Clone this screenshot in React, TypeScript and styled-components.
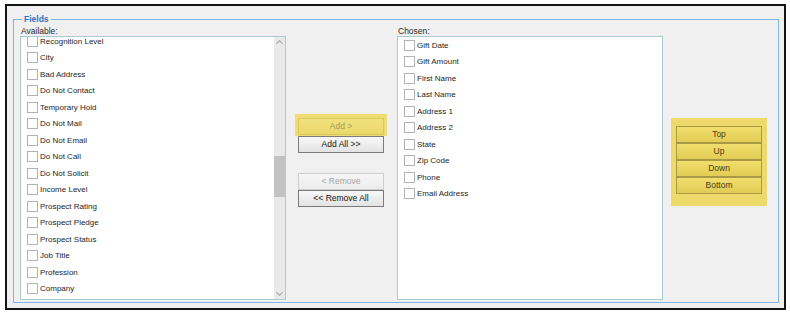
import React from "react";
import styled, { createGlobalStyle } from "styled-components";

const GlobalStyle = createGlobalStyle`
  body {
    margin: 0;
    background: #ffffff;
    font-family: "Liberation Sans", "DejaVu Sans", sans-serif;
  }
`;

const Frame = styled.div`
  margin: 4px 0 0 5px;
  width: 781px;
  box-sizing: border-box;
  border: 2px solid #141414;
  background: #f0f0f0;
  padding: 8px 5px 5px 6px;
`;

const FieldSet = styled.fieldset`
  margin: 0;
  border: 1px solid #7fb4e4;
  padding: 2px 11px 2px 6px;
  display: flex;
  align-items: flex-start;
`;

const Legend = styled.legend`
  margin-left: 2px;
  padding: 0 2px;
  color: #2f72c4;
  font-size: 8.5px;
  font-weight: bold;
  line-height: 10px;
`;

const Column = styled.div`
  display: flex;
  flex-direction: column;
  width: 266px;
`;

const Caption = styled.div`
  font-size: 8.5px;
  line-height: 10px;
  height: 10px;
  color: #2b2b2b;
  padding-left: 1px;
`;

const ListBox = styled.div`
  position: relative;
  height: 264px;
  box-sizing: border-box;
  border: 1px solid #a9cbd3;
  background: #ffffff;
  overflow: hidden;
`;

const Items = styled.ul<{ $offset: number }>`
  list-style: none;
  margin: ${(p) => p.$offset}px 0 0 0;
  padding: 0;
`;

const Item = styled.li`
  height: 16.53px;
  display: flex;
  align-items: center;
  padding-left: 6px;
  font-size: 8px;
  color: #1e1e1e;
`;

const Check = styled.span`
  width: 9px;
  height: 9px;
  border: 1px solid #b3b3b3;
  background: #ffffff;
  margin-right: 2px;
  flex-shrink: 0;
`;

const ScrollTrack = styled.div`
  position: absolute;
  top: 0;
  right: 0;
  bottom: 0;
  width: 11px;
  background: #e9e9e9;
`;

const ScrollArrow = styled.div<{ $down?: boolean }>`
  position: absolute;
  left: 3px;
  ${(p) => (p.$down ? "bottom: 4px;" : "top: 4px;")}
  width: 4px;
  height: 4px;
  border-left: 1px solid #a8a8a8;
  border-top: 1px solid #a8a8a8;
  transform: rotate(${(p) => (p.$down ? "225deg" : "45deg")});
`;

const ScrollThumb = styled.div`
  position: absolute;
  left: 0;
  right: 0;
  top: 119px;
  height: 41px;
  background: #c2c2c2;
`;

const Middle = styled.div`
  display: flex;
  flex-direction: column;
  width: 92px;
  margin: 88px 0 0 9px;
`;

const Highlight = styled.div`
  background: #efdc73;
  padding: 4px 3px 1px 3px;
`;

const Button = styled.button<{ $disabled?: boolean; $onYellow?: boolean }>`
  display: block;
  width: 86px;
  height: 17px;
  margin: 0;
  padding: 0;
  box-sizing: border-box;
  font-family: inherit;
  font-size: 8.5px;
  line-height: 15px;
  text-align: center;
  cursor: default;
  color: ${(p) => (p.$onYellow ? "#a39a5e" : p.$disabled ? "#a6a6a6" : "#111111")};
  border: 1px solid
    ${(p) => (p.$onYellow ? "#d9c760" : p.$disabled ? "#cdcdcd" : "#7b7b7b")};
  background: ${(p) =>
    p.$onYellow
      ? "linear-gradient(#f1e27f, #ebd86a)"
      : p.$disabled
      ? "linear-gradient(#f6f6f6, #ececec)"
      : "linear-gradient(#f8f8f8, #e3e3e3)"};
`;

const ButtonGroup = styled.div<{ $top?: number }>`
  display: flex;
  flex-direction: column;
  padding: 0 3px;
  margin-top: ${(p) => p.$top ?? 0}px;
`;

const SideColumn = styled(Column)`
  margin-left: 10px;
`;

const OrderPanel = styled.div`
  width: 96px;
  box-sizing: border-box;
  margin: 92px 0 0 8px;
  padding: 8px 5px 12px 5px;
  background: #eed96d;
  display: flex;
  flex-direction: column;
`;

const OrderButton = styled.button`
  display: block;
  width: 86px;
  height: 17px;
  margin: 0;
  padding: 0;
  box-sizing: border-box;
  font-family: inherit;
  font-size: 8.5px;
  line-height: 15px;
  color: #4a3d12;
  cursor: default;
  border: 1px solid #a99845;
  background: linear-gradient(#f1de6c, #e2cc55);
`;

const available = [
  "Recognition Level",
  "City",
  "Bad Address",
  "Do Not Contact",
  "Temporary Hold",
  "Do Not Mail",
  "Do Not Email",
  "Do Not Call",
  "Do Not Solicit",
  "Income Level",
  "Prospect Rating",
  "Prospect Pledge",
  "Prospect Status",
  "Job Title",
  "Profession",
  "Company",
];

const chosen = [
  "Gift Date",
  "Gift Amount",
  "First Name",
  "Last Name",
  "Address 1",
  "Address 2",
  "State",
  "Zip Code",
  "Phone",
  "Email Address",
];

function FieldList({ items, offset }: { items: string[]; offset: number }) {
  return (
    <Items $offset={offset}>
      {items.map((name) => (
        <Item key={name}>
          <Check />
          {name}
        </Item>
      ))}
    </Items>
  );
}

export default function App() {
  return (
    <>
      <GlobalStyle />
      <Frame>
        <FieldSet>
          <Legend>Fields</Legend>
          <Column>
            <Caption>Available:</Caption>
            <ListBox>
              <FieldList items={available} offset={-4} />
              <ScrollTrack>
                <ScrollArrow />
                <ScrollThumb />
                <ScrollArrow $down />
              </ScrollTrack>
            </ListBox>
          </Column>

          <Middle>
            <Highlight>
              <Button $onYellow>Add &gt;</Button>
            </Highlight>
            <ButtonGroup>
              <Button>Add All &gt;&gt;</Button>
            </ButtonGroup>
            <ButtonGroup $top={20}>
              <Button $disabled>&lt; Remove</Button>
              <Button>&lt;&lt; Remove All</Button>
            </ButtonGroup>
          </Middle>

          <SideColumn>
            <Caption>Chosen:</Caption>
            <ListBox>
              <FieldList items={chosen} offset={0} />
            </ListBox>
          </SideColumn>

          <OrderPanel>
            <OrderButton>Top</OrderButton>
            <OrderButton>Up</OrderButton>
            <OrderButton>Down</OrderButton>
            <OrderButton>Bottom</OrderButton>
          </OrderPanel>
        </FieldSet>
      </Frame>
    </>
  );
}
